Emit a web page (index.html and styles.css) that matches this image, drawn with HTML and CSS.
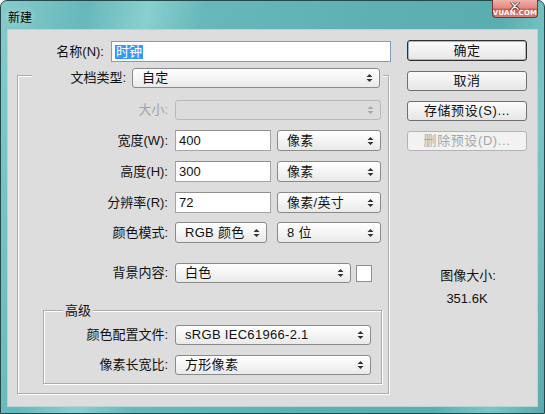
FILE: index.html
```html
<!DOCTYPE html>
<html lang="zh-CN">
<head>
<meta charset="utf-8">
<title>新建</title>
<link rel="stylesheet" href="styles.css">
</head>
<body>
<div class="window">
  <div class="titlebar">
    <span class="title">新建</span>
    <div class="close">
      <svg class="close-x" width="12" height="10" viewBox="0 0 12 10"><path d="M2 1 L10 9 M10 1 L2 9" stroke="#3a1512" stroke-width="3.4" stroke-linecap="round"/><path d="M2 1 L10 9 M10 1 L2 9" stroke="#ffffff" stroke-width="1.8" stroke-linecap="round"/></svg>
      <span class="wm">VUAN.COM</span>
    </div>
  </div>
  <div class="client">
    <div class="left">
      <div class="row name-row">
        <span class="lbl name-lbl">名称(N):</span>
        <div class="input name-input"><span class="hl">时钟</span></div>
      </div>
      <div class="group outer">
        <div class="group-head doc-head">
          <span class="lbl doc-lbl">文档类型:</span>
          <div class="select doc-sel"><span class="st">自定</span><svg class="arr" width="7" height="10" viewBox="0 0 7 10"><path d="M3.5 1 L6.5 4 L0.5 4 Z M0.5 6 L6.5 6 L3.5 9 Z" fill="#333"/></svg></div>
        </div>
        <div class="row r-size">
          <span class="lbl glbl dis">大小:</span>
          <div class="select disabled size-sel"><span class="st"></span><svg class="arr" width="7" height="10" viewBox="0 0 7 10"><path d="M3.5 1 L6.5 4 L0.5 4 Z M0.5 6 L6.5 6 L3.5 9 Z" fill="#a8a8a8"/></svg></div>
        </div>
        <div class="row r-gap10">
          <span class="lbl glbl">宽度(W):</span>
          <div class="input num">400</div>
          <div class="select unit"><span class="st">像素</span><svg class="arr" width="7" height="10" viewBox="0 0 7 10"><path d="M3.5 1 L6.5 4 L0.5 4 Z M0.5 6 L6.5 6 L3.5 9 Z" fill="#333"/></svg></div>
        </div>
        <div class="row r-gap10">
          <span class="lbl glbl">高度(H):</span>
          <div class="input num">300</div>
          <div class="select unit"><span class="st">像素</span><svg class="arr" width="7" height="10" viewBox="0 0 7 10"><path d="M3.5 1 L6.5 4 L0.5 4 Z M0.5 6 L6.5 6 L3.5 9 Z" fill="#333"/></svg></div>
        </div>
        <div class="row r-gap10">
          <span class="lbl glbl">分辨率(R):</span>
          <div class="input num">72</div>
          <div class="select unit"><span class="st">像素/英寸</span><svg class="arr" width="7" height="10" viewBox="0 0 7 10"><path d="M3.5 1 L6.5 4 L0.5 4 Z M0.5 6 L6.5 6 L3.5 9 Z" fill="#333"/></svg></div>
        </div>
        <div class="row r-gap9">
          <span class="lbl glbl">颜色模式:</span>
          <div class="select mode"><span class="st">RGB 颜色</span><svg class="arr" width="7" height="10" viewBox="0 0 7 10"><path d="M3.5 1 L6.5 4 L0.5 4 Z M0.5 6 L6.5 6 L3.5 9 Z" fill="#333"/></svg></div>
          <div class="select unit bits"><span class="st">8 位</span><svg class="arr" width="7" height="10" viewBox="0 0 7 10"><path d="M3.5 1 L6.5 4 L0.5 4 Z M0.5 6 L6.5 6 L3.5 9 Z" fill="#333"/></svg></div>
        </div>
        <div class="row r-bg">
          <span class="lbl glbl">背景内容:</span>
          <div class="select bgsel"><span class="st">白色</span><svg class="arr" width="7" height="10" viewBox="0 0 7 10"><path d="M3.5 1 L6.5 4 L0.5 4 Z M0.5 6 L6.5 6 L3.5 9 Z" fill="#333"/></svg></div>
          <div class="swatch"></div>
        </div>
        <div class="group inner">
          <div class="group-head adv-head">高级</div>
          <div class="row r-prof">
            <span class="lbl ilbl">颜色配置文件:</span>
            <div class="select isel"><span class="st">sRGB IEC61966-2.1</span><svg class="arr" width="7" height="10" viewBox="0 0 7 10"><path d="M3.5 1 L6.5 4 L0.5 4 Z M0.5 6 L6.5 6 L3.5 9 Z" fill="#333"/></svg></div>
          </div>
          <div class="row r-gap10">
            <span class="lbl ilbl">像素长宽比:</span>
            <div class="select isel"><span class="st">方形像素</span><svg class="arr" width="7" height="10" viewBox="0 0 7 10"><path d="M3.5 1 L6.5 4 L0.5 4 Z M0.5 6 L6.5 6 L3.5 9 Z" fill="#333"/></svg></div>
          </div>
        </div>
      </div>
    </div>
    <div class="right">
      <div class="btn default">确定</div>
      <div class="btn">取消</div>
      <div class="btn">存储预设(S)...</div>
      <div class="btn disabled">删除预设(D)...</div>
      <div class="size-title">图像大小:</div>
      <div class="size-val">351.6K</div>
    </div>
  </div>
</div>
</body>
</html>
```
FILE: styles.css
```css
* { box-sizing: border-box; }
html, body { margin: 0; padding: 0; background: #ffffff; }
body {
  width: 545px;
  height: 414px;
  font-family: "Liberation Sans", "Noto Sans CJK SC", sans-serif;
  font-size: 13px;
  color: #111;
}
.window {
  width: 545px;
  height: 414px;
  border: 1px solid #24484c;
  border-radius: 7px 7px 0 0;
  background: linear-gradient(100deg, #86cbcc 0%, #67b8ba 14%, #8acfcf 24%, #68b8ba 33%, #5eb1b3 60%, #5aaeb0 82%, #7cc6c6 91%, #5ca9ab 100%);
  padding: 0 6px 6px 6px;
  display: flex;
  flex-direction: column;
}
.titlebar {
  height: 28px;
  display: flex;
  align-items: flex-start;
}
.title {
  font-size: 12px;
  margin-top: 7px;
  padding-left: 1px;
  color: #000;
  text-shadow: 0 0 6px rgba(255,255,255,0.6);
}
.close {
  margin-left: auto;
  margin-top: -1px;
  width: 46px;
  height: 18px;
  border: 1px solid #6b3a36;
  border-top: none;
  border-radius: 0 0 4px 4px;
  background: linear-gradient(#f0b3aa 0%, #e38a80 45%, #d0594d 55%, #dc7e70 100%);
  display: flex;
  flex-direction: column;
  align-items: center;
  overflow: hidden;
}
.close-x { margin-top: 2px; display: block; }
.wm {
  font-family: "DejaVu Sans", sans-serif;
  font-size: 7px;
  line-height: 7px;
  color: #ffffff;
  font-weight: bold;
  letter-spacing: 0.2px;
}
.client {
  flex: 1;
  border: 1px solid #b7d4d6;
  background: #dddddd;
  display: flex;
}
.left { width: 392px; }
.right {
  width: 137px;
  padding-left: 7px;
  display: flex;
  flex-direction: column;
}
.row {
  display: flex;
  align-items: center;
  gap: 7px;
}
.lbl {
  text-align: right;
  white-space: nowrap;
  line-height: 16px;
}
.dis { color: #a3a3a3; }
.name-row { margin-top: 11px; }
.name-lbl { width: 96px; }
.input {
  height: 21px;
  background: #ffffff;
  border: 1px solid #a5a5a5;
  border-top-color: #8f8f8f;
  padding-left: 3px;
  display: flex;
  align-items: center;
  line-height: 16px;
}
.name-input {
  width: 280px;
  border-color: #7f9db9;
}
.hl {
  background: #3399ff;
  color: #ffffff;
  line-height: 14px;
  padding: 0 1px;
}
.num { width: 96px; }
.group {
  border: 1px solid #acacac;
  box-shadow: inset 1px 1px 0 #ffffff, 1px 1px 0 #ffffff;
}
.outer {
  margin-top: 13px;
  margin-left: 9px;
  width: 372px;
}
.group-head {
  width: max-content;
  background: #dddddd;
  margin-top: -8px;
}
.doc-head {
  display: flex;
  align-items: center;
  gap: 5px;
  margin-left: 14px;
  padding-right: 3px;
}
.doc-lbl { width: 95px; padding-right: 1px; }
.select {
  height: 21px;
  border: 1px solid #8a8a8a;
  border-radius: 3px;
  background: linear-gradient(#ffffff 0%, #f6f6f6 45%, #e9e9e9 100%);
  display: flex;
  align-items: center;
  padding-left: 9px;
  padding-right: 6px;
  line-height: 16px;
}
.select .st { flex: 1; white-space: nowrap; letter-spacing: 0.3px; }
.select .arr { display: block; flex: none; }
.doc-sel { width: 248px; height: 20px; }
.select.disabled {
  background: #dcdcdc;
  border-color: #b9b9b9;
}
.glbl { width: 150px; }
.r-size { margin-top: 12px; }
.size-sel { width: 206px; height: 20px; }
.r-gap10 { margin-top: 10px; }
.r-gap9 { margin-top: 9px; }
.unit { width: 104px; margin-left: -1px; }
.mode { width: 92px; }
.bits { margin-left: 3px; }
.r-bg { margin-top: 20px; gap: 5px; }
.r-bg .glbl { margin-right: 2px; }
.bgsel { width: 176px; height: 20px; }
.swatch {
  width: 16px;
  height: 17px;
  background: #ffffff;
  border: 1px solid #8f8f8f;
}
.inner {
  margin-top: 27px;
  margin-left: 25px;
  margin-right: 6px;
  margin-bottom: 9px;
  padding-bottom: 8px;
}
.adv-head {
  margin-left: 19px;
  padding: 0 2px;
  line-height: 16px;
  height: 16px;
}
.ilbl { width: 124px; }
.r-prof { margin-top: 6px; }
.isel { width: 196px; height: 20px; }
.btn {
  width: 120px;
  height: 20px;
  margin-top: 10px;
  border: 1px solid #707070;
  border-radius: 3px;
  background: linear-gradient(#fbfbfb 0%, #f1f1f1 50%, #e6e6e6 100%);
  display: flex;
  align-items: center;
  justify-content: center;
  letter-spacing: 0.6px;
  line-height: 16px;
  white-space: nowrap;
}
.btn.default {
  height: 21px;
  border-color: #2f2f2f;
  box-shadow: inset 0 0 0 1px #9ab8d0;
}
.btn.disabled {
  color: #a6a6a6;
  border-color: #b3b3b3;
  background: #f2f2f2;
}
.size-title {
  width: 120px;
  text-align: center;
  margin-top: 117px;
  line-height: 16px;
  padding-left: 2px;
}
.size-val {
  width: 120px;
  text-align: center;
  margin-top: 7px;
  line-height: 16px;
}
```
